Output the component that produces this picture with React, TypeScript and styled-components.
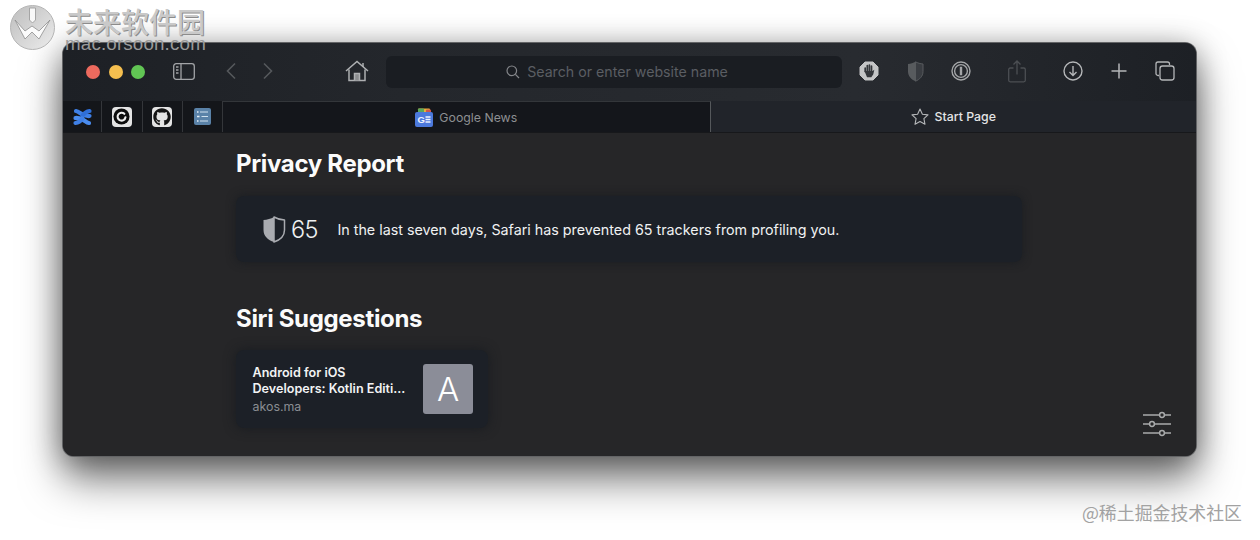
import React from "react";
import styled, { createGlobalStyle } from "styled-components";
import { FaGithub } from "react-icons/fa";

const Global = createGlobalStyle`
  html, body { margin: 0; padding: 0; background: #fff; }
  body { width: 1260px; height: 540px; overflow: hidden; font-family: Inter, "Liberation Sans", sans-serif; }
  #root { width: 1260px; height: 540px; }
`;

const Page = styled.div`
  position: relative;
  width: 1260px;
  height: 540px;
  padding: 43px 64px 0 63px;
  box-sizing: border-box;
  background: #fff;
  overflow: hidden;
`;

const Window = styled.div`
  height: 413px;
  border-radius: 11px;
  overflow: hidden;
  display: flex;
  flex-direction: column;
  box-shadow: 0 0 0 1px #636466, 0 24px 42px rgba(0, 0, 0, 0.5), 0 4px 30px rgba(0, 0, 0, 0.38);
  background: #262628;
`;

const Toolbar = styled.div`
  height: 58px;
  flex: none;
  display: flex;
  align-items: center;
  padding-left: 23px;
  background: linear-gradient(90deg, #1d2025 0%, #24272c 30%, #282b30 70%, #1d2025 100%);
`;

const Lights = styled.div`
  display: flex;
  gap: 8.5px;
`;

const Light = styled.span<{ $c: string }>`
  width: 14px;
  height: 14px;
  border-radius: 50%;
  background: ${(p) => p.$c};
`;

const Slot = styled.div<{ $w?: number; $ml?: number }>`
  width: ${(p) => p.$w ?? 46}px;
  margin-left: ${(p) => p.$ml ?? 0}px;
  margin-top: -2px;
  flex: none;
  display: flex;
  justify-content: center;
  align-items: center;
`;

const Search = styled.div`
  width: 456px;
  height: 32px;
  margin-left: 11px;
  flex: none;
  border-radius: 6px;
  background: #1a1d22;
  display: flex;
  align-items: center;
  justify-content: center;
  gap: 7px;
  padding: 0 0 1px 6px;
  box-sizing: border-box;
  font-size: 14.2px;
  color: #5b5e63;
`;

const TabBar = styled.div`
  height: 32px;
  flex: none;
  display: flex;
  border-bottom: 1px solid #17181b;
  box-sizing: border-box;
  background: #21242a;
`;

const Fav = styled.div`
  width: 40.25px;
  flex: none;
  display: flex;
  align-items: center;
  justify-content: center;
  background: #14161a;
  border-right: 1px solid #34363a;
  box-sizing: border-box;
  &:first-child { width: 39.25px; }
`;

const Tab = styled.div<{ $active?: boolean }>`
  flex: ${(p) => (p.$active ? "0 0 487.5px" : "1")};
  display: flex;
  align-items: center;
  justify-content: center;
  gap: 6px;
  font-size: 12.3px;
  color: ${(p) => (p.$active ? "#8d8f92" : "#e4e5e6")};
  font-weight: ${(p) => (p.$active ? 400 : 500)};
  background: ${(p) => (p.$active ? "#14161b" : "transparent")};
  border-right: ${(p) => (p.$active ? "1px solid #55585b" : "none")};
  border-top: ${(p) => (p.$active ? "1px solid #33363a" : "none")};
  box-sizing: border-box;
`;

const Content = styled.div`
  flex: 1;
  position: relative;
  padding: 16px 0 0 173px;
  background: #262628;
  color: #fff;
`;

const Heading = styled.h2`
  margin: 0;
  font-size: 24px;
  line-height: 30px;
  font-weight: 700;
  letter-spacing: -0.33px;
  color: #fbfbfb;
`;

const ReportCard = styled.div`
  width: 786px;
  height: 66px;
  margin: 17px 0 42px;
  box-sizing: border-box;
  padding-left: 26px;
  border-radius: 8px;
  background: #1c2027;
  box-shadow: 0 0 10px rgba(20, 24, 30, 0.7);
  display: flex;
  align-items: center;
`;

const Count = styled.span`
  font-size: 23.5px;
  font-weight: 300;
  margin-left: 5px;
  color: #eef0f1;
  letter-spacing: -0.6px;
`;

const ReportText = styled.span`
  font-size: 14.3px;
  margin-left: 19.5px;
  color: #f0f1f2;
`;

const SiriCard = styled.div`
  width: 252px;
  height: 78px;
  margin-top: 16px;
  box-sizing: border-box;
  padding: 0 15px 0 16.5px;
  border-radius: 8px;
  background: #1c2027;
  box-shadow: 0 0 12px rgba(20, 24, 30, 0.75);
  display: flex;
  align-items: center;
  justify-content: space-between;
`;

const SiriText = styled.div`
  display: flex;
  flex-direction: column;
  margin-top: 4px;
`;

const SiriTitle = styled.div`
  font-size: 12.6px;
  font-weight: 600;
  line-height: 16px;
  color: #f2f3f4;
  white-space: pre-line;
`;

const SiriHost = styled.div`
  font-size: 12.4px;
  line-height: 20px;
  color: #8b8e93;
`;

const Tile = styled.div`
  width: 50px;
  height: 50px;
  border-radius: 3px;
  background: #8b8d98;
  color: #fff;
  font-size: 33px;
  font-weight: 300;
  display: flex;
  align-items: center;
  justify-content: center;
`;

const Settings = styled.div`
  position: absolute;
  right: 24px;
  bottom: 19px;
  display: flex;
`;

const Mark = styled.div`
  position: absolute;
  left: 10px;
  top: 5px;
  display: flex;
  z-index: 2;
`;

const MarkText = styled.div`
  margin: 2px 0 0 9px;
  display: flex;
  flex-direction: column;
`;

const MarkTitle = styled.div`
  font-family: "Noto Sans CJK SC", sans-serif;
  font-size: 28px;
  line-height: 29px;
  font-weight: 500;
  color: #c9c9c9;
  text-shadow: 1px 1px 0 #8c8c8c;
  white-space: nowrap;
`;

const MarkUrl = styled.div`
  font-family: "Liberation Sans", sans-serif;
  font-size: 18.8px;
  line-height: 15px;
  color: #9a9a9a;
  letter-spacing: 0.15px;
`;

const Credit = styled.div`
  position: absolute;
  right: 18px;
  top: 500px;
  font-family: "Noto Sans CJK SC", sans-serif;
  font-size: 17.9px;
  line-height: 24px;
  color: #a2a2a2;
  white-space: nowrap;
`;

const Sheet = styled.div`
  width: 20px;
  height: 20px;
  border-radius: 4px;
  display: flex;
  align-items: center;
  justify-content: center;
  background: #e4e4e4;
`;

const App = () => (
  <Page>
    <Global />
    <Mark>
      <svg width="46" height="46" viewBox="0 0 46 46">
        <defs>
          <linearGradient id="wm" x1="0" y1="0" x2="1" y2="1">
            <stop offset="0" stopColor="#bdbdbd" />
            <stop offset="1" stopColor="#ececec" />
          </linearGradient>
        </defs>
        <circle cx="22.5" cy="22.5" r="22" fill="url(#wm)" stroke="#b5b5b5" />
        <path d="M5 15 L15 34 L22 27 L29 34 L40 15 L29 26 L22 21 L15 26 Z" fill="#fbfbfb" stroke="#8e8e8e" strokeWidth="0.8" />
        <path d="M19.5 3 h6 v12 l-3 3 -3 -3z" fill="#f8f8f8" stroke="#a5a5a5" />
      </svg>
      <MarkText>
        <MarkTitle>未来软件园</MarkTitle>
        <MarkUrl>mac.orsoon.com</MarkUrl>
      </MarkText>
    </Mark>
    <Window>
      <Toolbar>
        <Lights>
          <Light $c="#ed6a5e" />
          <Light $c="#f5bf4f" />
          <Light $c="#61c554" />
        </Lights>
        <Slot $w={22} $ml={28}>
          <svg width="22" height="17" viewBox="0 0 22 17" fill="none" stroke="#a2a4a7" strokeWidth="1.3">
            <rect x="0.7" y="0.7" width="20.6" height="15.6" rx="2.5" />
            <path d="M8 1v15" />
            <path d="M3 4h2.5M3 7h2.5M3 10h2.5" />
          </svg>
        </Slot>
        <Slot $w={36} $ml={18}>
          <svg width="12" height="18" viewBox="0 0 12 18" fill="none" stroke="#55585c" strokeWidth="1.6">
            <path d="M10 1.5 2.5 9l7.5 7.5" />
          </svg>
        </Slot>
        <Slot $w={36} $ml={1}>
          <svg width="12" height="18" viewBox="0 0 12 18" fill="none" stroke="#55585c" strokeWidth="1.6">
            <path d="M2 1.5 9.500 9 2 16.500" />
          </svg>
        </Slot>
        <Slot $w={36} $ml={53}>
          <svg width="24" height="22" viewBox="0 0 24 22" fill="none" stroke="#aeb0b2" strokeWidth="1.5">
            <path d="M1 11 12 1.500 23 11" />
            <path d="M18 3v4" />
            <path d="M4 9.500V20.500h16V9.500" />
            <path d="M9.500 20.500v-7h5v7" fill="#8a8c8e" />
          </svg>
        </Slot>
        <Search>
          <svg width="14" height="14" viewBox="0 0 14 14" fill="none" stroke="#84868a" strokeWidth="1.2">
            <circle cx="5.800" cy="5.800" r="4.800" />
            <path d="M9.400 9.400 13 13" />
          </svg>
          Search or enter website name
        </Search>
        <Slot $ml={4}>
          <svg width="20" height="20" viewBox="0 0 20 20">
            <path d="M6 1h8l5 5v8l-5 5H6l-5-5V6z" fill="#c4c5c6" stroke="#c4c5c6" strokeLinejoin="round" />
            <path d="M6.200 10.500V7M8.300 10V4.500M10.400 10V4M12.500 10.500V5.200" fill="none" stroke="#34373b" strokeWidth="1.700" strokeLinecap="round" />
            <path d="M5.500 10h8l1.800-1.200-1 4.500-2 3H8z" fill="#34373b" />
          </svg>
        </Slot>
        <Slot>
          <svg width="17" height="21" viewBox="0 0 17 21">
            <path d="M8.500 .8C6.500 2 3.500 2.800 1 3v7.500c0 4.800 3.500 8 7.500 9.700z" fill="#585b5e" />
            <path d="M8.500 .8c2 1.200 5 2 7.500 2.200v7.500c0 4.800-3.500 8-7.500 9.700z" fill="#3a3d42" stroke="#585b5e" strokeWidth="1" />
          </svg>
        </Slot>
        <Slot>
          <svg width="20" height="20" viewBox="0 0 20 20" fill="none" stroke="#a3a5a7">
            <circle cx="10" cy="10" r="9" strokeWidth="1.400" />
            <circle cx="10" cy="10" r="6.400" strokeWidth="1.400" />
            <path d="M10 5.800v8.400" strokeWidth="2.400" />
          </svg>
        </Slot>
        <Slot $ml={10}>
          <svg width="18" height="23" viewBox="0 0 18 23" fill="none" stroke="#4c4f53" strokeWidth="1.300">
            <path d="M5.500 8H2.200a1.500 1.500 0 0 0-1.500 1.500v10.800a1.500 1.500 0 0 0 1.500 1.500h13.600a1.500 1.500 0 0 0 1.500-1.500V9.500A1.500 1.500 0 0 0 15.800 8H12.500" />
            <path d="M9 14.500V1M5.500 4.500 9 1l3.500 3.500" />
          </svg>
        </Slot>
        <Slot $ml={10}>
          <svg width="20" height="20" viewBox="0 0 20 20" fill="none" stroke="#b4b6b8" strokeWidth="1.400">
            <circle cx="10" cy="10" r="9" />
            <path d="M10 5v9.500M6.500 11 10 14.500 13.500 11" />
          </svg>
        </Slot>
        <Slot>
          <svg width="16" height="16" viewBox="0 0 16 16" fill="none" stroke="#b4b6b8" strokeWidth="1.500">
            <path d="M8 .5v15M.5 8h15" />
          </svg>
        </Slot>
        <Slot>
          <svg width="20" height="20" viewBox="0 0 20 20" fill="none" stroke="#b4b6b8" strokeWidth="1.300">
            <path d="M4 14.500H3a2 2 0 0 1-2-2V3a2 2 0 0 1 2-2h9.500a2 2 0 0 1 2 2v1" />
            <rect x="5" y="5" width="14" height="14" rx="2.500" />
          </svg>
        </Slot>
      </Toolbar>
      <TabBar>
        <Fav>
          <svg width="19" height="18" viewBox="0 0 19 18" fill="none" strokeWidth="4.200" strokeLinecap="round">
            <path d="M3 3c4 .5 5.500 5.500 13.500 5" stroke="#3f80e6" />
            <path d="M16.500 3C13 3.500 11 5.500 9.500 7.500" stroke="#2f6fd8" />
            <path d="M16 15c-4-.5-5.500-5.500-13.500-5" stroke="#4a8cef" />
            <path d="M2.500 15C6 14.500 8 12.500 9.500 10.500" stroke="#3f80e6" />
          </svg>
        </Fav>
        <Fav>
          <Sheet>
            <svg width="17" height="17" viewBox="0 0 18 18">
              <circle cx="9" cy="9" r="8.500" fill="#0c0c0c" />
              <path d="M12 6.200a4.200 4.200 0 1 0 1.200 3.600" fill="none" stroke="#eee" strokeWidth="2.200" strokeLinecap="round" />
            </svg>
          </Sheet>
        </Fav>
        <Fav>
          <Sheet>
            <FaGithub size={18} color="#141414" />
          </Sheet>
        </Fav>
        <Fav>
          <svg width="17" height="17" viewBox="0 0 17 17">
            <rect width="17" height="17" rx="2" fill="#5a82a8" />
            <path d="M6 4h8M7.500 8.500H14M6 13h8" stroke="#cfe0ee" strokeWidth="1.100" />
            <path d="M3 4h1.500M3 8.500h2.500M3 13h1.500" stroke="#e8f0f6" strokeWidth="1.600" />
          </svg>
        </Fav>
        <Tab $active>
          <svg width="18" height="19" viewBox="0 0 18 19">
            <rect x="3" y="0.500" width="12" height="5" rx="1" fill="#e9b13c" />
            <rect x="3" y="0.500" width="6" height="5" rx="1" fill="#5aa85c" />
            <rect x="11" y="1.500" width="5" height="5" rx="1" fill="#d2564a" />
            <rect y="4" width="18" height="15" rx="2" fill="#4c79dd" />
            <text x="2.400" y="15" fontFamily="Liberation Sans" fontWeight="700" fontSize="9.500" fill="#eef3ff">G</text>
            <path d="M10.500 9h5M10.500 11.500h5M10.500 14h5" stroke="#eef3ff" strokeWidth="1.300" />
          </svg>
          Google News
        </Tab>
        <Tab>
          <svg width="18" height="17" viewBox="0 0 18 17" fill="none" stroke="#b4b6b8" strokeWidth="1.100" strokeLinejoin="round">
            <path d="M9 1l2.400 5.200 5.600.7-4.100 3.800 1.100 5.600L9 13.500l-5 2.800 1.100-5.600L1 6.900l5.600-.7z" />
          </svg>
          Start Page
        </Tab>
      </TabBar>
      <Content>
        <Heading>Privacy Report</Heading>
        <ReportCard>
          <svg width="24" height="27" viewBox="0 0 24 27">
            <path d="M12 1C9 2.800 5 3.800 1.500 4v10c0 6 4.500 10 10.500 12z" fill="#a9abb0" />
            <path d="M12 1c3 1.800 7 2.800 10.500 3v10c0 6-4.500 10-10.500 12z" fill="#1c2027" stroke="#a9abb0" strokeWidth="1.500" strokeLinejoin="round" />
          </svg>
          <Count>65</Count>
          <ReportText>In the last seven days, Safari has prevented 65 trackers from profiling you.</ReportText>
        </ReportCard>
        <Heading>Siri Suggestions</Heading>
        <SiriCard>
          <SiriText>
            <SiriTitle>{"Android for iOS\nDevelopers: Kotlin Editi..."}</SiriTitle>
            <SiriHost>akos.ma</SiriHost>
          </SiriText>
          <Tile>A</Tile>
        </SiriCard>
        <Settings>
          <svg width="30" height="26" viewBox="0 0 30 26" fill="none" stroke="#a9aaab" strokeWidth="1.500">
            <path d="M1 4h17M22 4h7M1 13h7M12 13h17M1 22h17M22 22h7" />
            <circle cx="20" cy="4" r="2.400" />
            <circle cx="10" cy="13" r="2.400" />
            <circle cx="20" cy="22" r="2.400" />
          </svg>
        </Settings>
      </Content>
    </Window>
    <Credit>@稀土掘金技术社区</Credit>
  </Page>
);

export default App;
